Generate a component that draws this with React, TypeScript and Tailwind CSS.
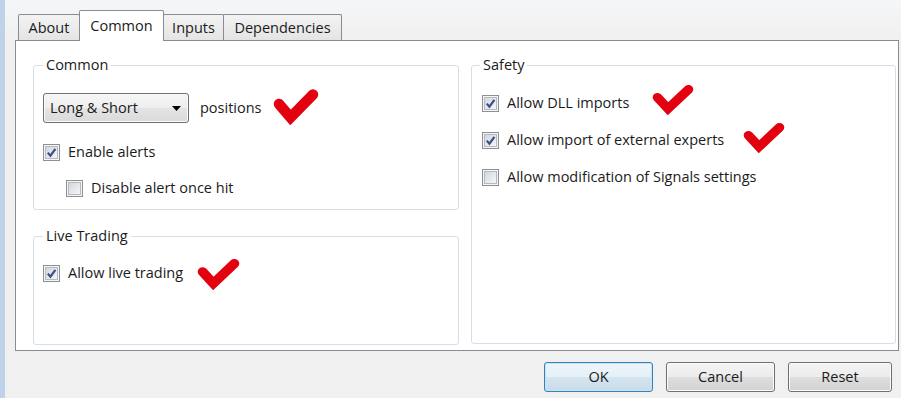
import React from "react";

function Box({ checked }: { checked?: boolean }) {
  return (
    <span className="w-[17px] h-[17px] shrink-0 border border-[#8e8f8f] bg-[#f6f6f6] p-[1px] flex">
      <span className="flex-1 border border-[#b4bac3] bg-[linear-gradient(135deg,#d3d8df,#f4f5f7)] flex items-center justify-center">
        {checked && (
          <svg width="11" height="11" viewBox="0 0 11 11">
            <path d="M1.8 5.6 L4.4 8.7 L9.4 1.8" fill="none" stroke="#3c4f86" strokeWidth="2.2" />
          </svg>
        )}
      </span>
    </span>
  );
}

function RedCheck({ w, h, className }: { w: number; h: number; className?: string }) {
  return (
    <svg width={w} height={h} viewBox="0 0 46 38" preserveAspectRatio="none" className={className}>
      <path
        d="M6 17 L17.5 30.5 L40 7.5"
        fill="none"
        stroke="#e3000f"
        strokeWidth="10.5"
        strokeLinecap="round"
        strokeLinejoin="miter"
      />
    </svg>
  );
}

const btnBg =
  "bg-[linear-gradient(to_bottom,#f4f4f4_0%,#ececec_50%,#dedede_50%,#d2d2d2_100%)]";

function Button({ children, primary }: { children: React.ReactNode; primary?: boolean }) {
  return (
    <div
      className={
        "h-[30px] rounded-[3px] border flex items-center justify-center " +
        (primary
          ? "border-[#3c7fb1] shadow-[inset_0_0_0_1px_#bfe6f8] bg-[linear-gradient(to_bottom,#eef5fa_0%,#e5f0f7_50%,#d5e5f0_50%,#c8dce9_100%)]"
          : "border-[#707070] shadow-[inset_0_0_0_1px_#fbfbfb] " + btnBg)
      }
    >
      {children}
    </div>
  );
}

function Tab({ children, w }: { children: React.ReactNode; w: string }) {
  return (
    <div
      className={
        w +
        " h-[26px] -ml-px first:ml-0 border border-b-0 border-[#898c95] rounded-t-[2px] bg-[linear-gradient(to_bottom,#f3f3f3,#e4e4e4)] flex items-center justify-center"
      }
    >
      {children}
    </div>
  );
}

export default function App() {
  return (
    <div className="w-[901px] h-[398px] bg-[#f0f0f0] flex overflow-hidden text-[14.5px] text-[#1b1b1b] font-['Open_Sans',sans-serif]">
      <div className="w-[5px] shrink-0 bg-[#bed3ea]" />
      <div className="flex-1 flex flex-col pl-[10px] pr-[2px] pt-[10px] bg-[linear-gradient(to_bottom,#f5f6f8_0px,#f0f0f0_40px)]">
        {/* tabs */}
        <div className="h-[30px] flex items-end pl-[3px] shrink-0">
          <Tab w="w-[62px]">About</Tab>
          <div className="w-[85px] h-[31px] -ml-px -mb-px relative z-10 bg-white border border-b-0 border-[#898c95] rounded-t-[2px] flex items-center justify-center">
            Common
          </div>
          <Tab w="w-[61px]">Inputs</Tab>
          <Tab w="w-[119px]">Dependencies</Tab>
        </div>

        {/* panel */}
        <div className="h-[311px] shrink-0 border border-[#898c95] bg-white flex gap-[12px] pl-[17px] pr-[2px] pt-[14px] pb-[5px]">
          <div className="w-[426px] flex flex-col gap-[16px]">
            <fieldset className="h-[155px] border border-[#d5dfe5] rounded-[3px] pl-[9px]">
              <legend className="px-[3px] leading-[20px]">Common</legend>
              <div className="mt-[18px] h-[30px] flex items-center">
                <div className="w-[146px] h-[30px] rounded-[3px] border border-[#707070] shadow-[inset_0_0_0_1px_#fbfbfb] bg-[linear-gradient(to_bottom,#f6f6f6_0%,#eeeeee_50%,#e4e4e4_50%,#dadada_100%)] flex items-center justify-between pl-[6px] pr-[7px]">
                  <span>Long &amp; Short</span>
                  <svg width="9" height="5" viewBox="0 0 9 5">
                    <path d="M0 0 H9 L4.5 5 Z" fill="#000" />
                  </svg>
                </div>
                <span className="ml-[11px]">positions</span>
                <RedCheck w={46} h={38} className="ml-[11px] -translate-y-[2px]" />
              </div>
              <div className="mt-[19px] h-[20px] flex items-center gap-[8px]">
                <Box checked />
                <span>Enable alerts</span>
              </div>
              <div className="mt-[16px] h-[20px] pl-[23px] flex items-center gap-[8px]">
                <Box />
                <span>Disable alert once hit</span>
              </div>
            </fieldset>

            <fieldset className="flex-1 border border-[#d5dfe5] rounded-[3px] pl-[9px]">
              <legend className="px-[3px] leading-[20px]">Live Trading</legend>
              <div className="mt-[17px] h-[20px] flex items-center gap-[8px]">
                <Box checked />
                <span>Allow live trading</span>
                <RedCheck w={43} h={33} className="ml-[6px]" />
              </div>
            </fieldset>
          </div>

          <fieldset className="w-[425px] h-[289px] border border-[#d5dfe5] rounded-[3px] pl-[10px]">
            <legend className="-ml-[2px] px-[3px] leading-[20px]">Safety</legend>
            <div className="mt-[18px] h-[20px] flex items-center gap-[8px]">
              <Box checked />
              <span>Allow DLL imports</span>
              <RedCheck w={42} h={32} className="ml-[15px] -translate-y-[4px]" />
            </div>
            <div className="mt-[17px] h-[20px] flex items-center gap-[8px]">
              <Box checked />
              <span>Allow import of external experts</span>
              <RedCheck w={42} h={32} className="ml-[11px] -translate-y-[3px]" />
            </div>
            <div className="mt-[17px] h-[20px] flex items-center gap-[8px]">
              <Box />
              <span>Allow modification of Signals settings</span>
            </div>
          </fieldset>
        </div>

        {/* buttons */}
        <div className="mt-[11px] h-[30px] flex justify-end gap-[13px] pr-[7px]">
          <div className="w-[109px]">
            <Button primary>OK</Button>
          </div>
          <div className="w-[109px]">
            <Button>Cancel</Button>
          </div>
          <div className="w-[104px]">
            <Button>Reset</Button>
          </div>
        </div>
      </div>
    </div>
  );
}
